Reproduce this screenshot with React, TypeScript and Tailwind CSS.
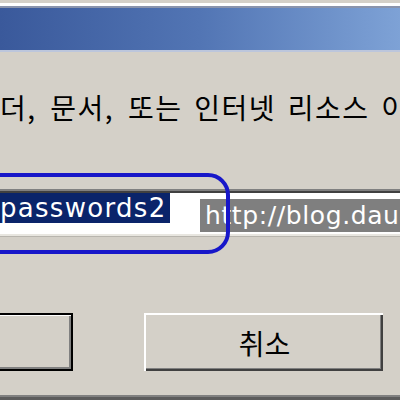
import React from "react";

const ko = "font-['Noto_Sans_CJK_KR','Noto_Sans',sans-serif]";
const latin = "font-['DejaVu_Sans','Noto_Sans',sans-serif]";

function TitleBar() {
  return (
    <div className="flex flex-col">
      <div className="h-[3px] bg-[#d4d0c8]" />
      <div className="h-[3px] bg-white" />
      <div className="h-[2px] bg-[#8a94ac]" />
      <div className="h-[42px] bg-gradient-to-r from-[#3a599b] via-[#5275b4] to-[#7ea2d6]" />
      <div className="h-[2px] bg-[#bcc6dc]" />
    </div>
  );
}

function RunField() {
  return (
    <div className="relative mt-[67px] h-[48px]">
      {/* sunken edit box, left part off screen */}
      <div className="ml-[-10px] flex h-full flex-col">
        <div className="h-[2px] bg-[#808080]" />
        <div className="h-[2px] bg-[#404040]" />
        <div className="flex-1 bg-white">
          <div className="flex h-[30px] w-[180px] items-center overflow-hidden bg-[#0a246a]">
            <span
              className={`${latin} ml-[-2px] whitespace-nowrap text-[26px] leading-none tracking-[1.3px] text-white`}
            >
              rpasswords2
            </span>
          </div>
        </div>
        <div className="h-[2px] bg-[#e8e6e0]" />
        <div className="h-[1px] bg-[#b8b5ae]" />
      </div>

      {/* tooltip-like address box */}
      <div className="absolute left-[200px] top-[10px] flex h-[33px] w-[220px] items-center bg-[#7f7f7f] pl-[5px]">
        <span className={`${latin} whitespace-nowrap text-[25px] leading-none tracking-[0.6px] text-white`}>
          http://blog.daum.net
        </span>
      </div>

      {/* hand-drawn highlight */}
      <div className="absolute left-[-30px] top-[-16px] h-[81px] w-[260px] rounded-[22px] border-[4px] border-[#1717c9]" />
    </div>
  );
}

function Buttons() {
  return (
    <div className="mt-[76px] flex items-start gap-[71px]">
      <button
        type="button"
        className="ml-[-80px] h-[58px] w-[153px] border-2 border-black bg-[#d4d0c8] shadow-[inset_1px_1px_0_#fff,inset_-2px_-2px_0_#808080]"
      />
      <button
        type="button"
        className={`${ko} h-[58px] w-[239px] border-t-2 border-l-2 border-t-white border-l-white bg-[#d4d0c8] text-[28px] leading-none text-black shadow-[inset_-2px_-2px_0_#404040,inset_-3px_-3px_0_#808080]`}
      >
        취소
      </button>
    </div>
  );
}

export default function App() {
  return (
    <div className="relative flex h-[400px] w-[400px] flex-col overflow-hidden bg-[#d4d0c8]">
      <TitleBar />
      <p
        className={`${ko} mt-[40px] h-[30px] whitespace-nowrap text-[28px] leading-[30px] tracking-[1.5px] text-black [word-spacing:4px]`}
      >
        더<span className="mr-[2px]">,</span> 문서<span className="mr-[2px]">,</span> 또는 인터넷 리소스 이름을
      </p>
      <RunField />
      <Buttons />
      <div className="mt-auto h-[5px] border-t-2 border-[#808080] bg-[#5c5c5c]" />
    </div>
  );
}
